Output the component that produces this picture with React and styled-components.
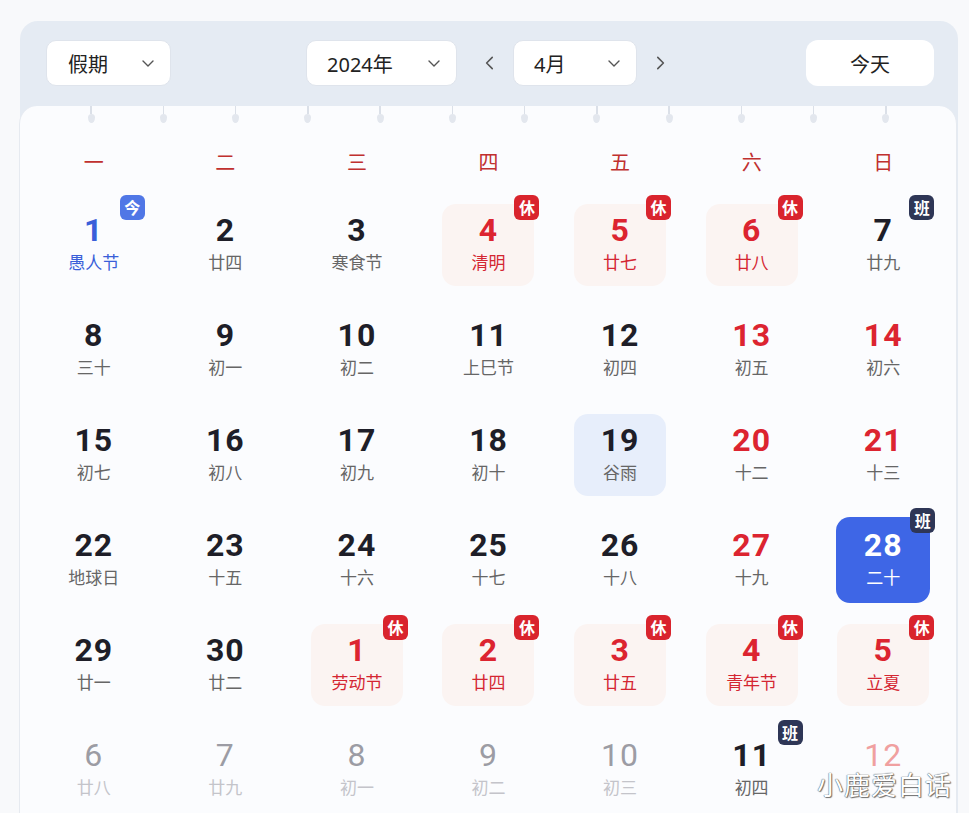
import React from "react";
import styled, { createGlobalStyle } from "styled-components";

const GlobalStyle = createGlobalStyle`
  html, body {
    margin: 0;
    padding: 0;
    background: #f8f9fb;
    overflow: hidden;
  }
  body {
    font-family: "Noto Sans CJK SC", "Noto Sans", sans-serif;
    color: #222;
  }
`;

const weekdays = ["一", "二", "三", "四", "五", "六", "日"];

// type: today | holiday | weekend | sel | active | muted | mutedWeekend
const weeks = [
  [
    { d: 1, l: "愚人节", t: "today", badge: "今" },
    { d: 2, l: "廿四" },
    { d: 3, l: "寒食节" },
    { d: 4, l: "清明", t: "holiday", badge: "休" },
    { d: 5, l: "廿七", t: "holiday", badge: "休" },
    { d: 6, l: "廿八", t: "holiday", badge: "休" },
    { d: 7, l: "廿九", badge: "班" },
  ],
  [
    { d: 8, l: "三十" },
    { d: 9, l: "初一" },
    { d: 10, l: "初二" },
    { d: 11, l: "上巳节" },
    { d: 12, l: "初四" },
    { d: 13, l: "初五", t: "weekend" },
    { d: 14, l: "初六", t: "weekend" },
  ],
  [
    { d: 15, l: "初七" },
    { d: 16, l: "初八" },
    { d: 17, l: "初九" },
    { d: 18, l: "初十" },
    { d: 19, l: "谷雨", t: "sel" },
    { d: 20, l: "十二", t: "weekend" },
    { d: 21, l: "十三", t: "weekend" },
  ],
  [
    { d: 22, l: "地球日" },
    { d: 23, l: "十五" },
    { d: 24, l: "十六" },
    { d: 25, l: "十七" },
    { d: 26, l: "十八" },
    { d: 27, l: "十九", t: "weekend" },
    { d: 28, l: "二十", t: "active", badge: "班" },
  ],
  [
    { d: 29, l: "廿一" },
    { d: 30, l: "廿二" },
    { d: 1, l: "劳动节", t: "holiday", badge: "休" },
    { d: 2, l: "廿四", t: "holiday", badge: "休" },
    { d: 3, l: "廿五", t: "holiday", badge: "休" },
    { d: 4, l: "青年节", t: "holiday", badge: "休" },
    { d: 5, l: "立夏", t: "holiday", badge: "休" },
  ],
  [
    { d: 6, l: "廿八", t: "muted" },
    { d: 7, l: "廿九", t: "muted" },
    { d: 8, l: "初一", t: "muted" },
    { d: 9, l: "初二", t: "muted" },
    { d: 10, l: "初三", t: "muted" },
    { d: 11, l: "初四", badge: "班" },
    { d: 12, l: "", t: "mutedWeekend" },
  ],
];

const numColor = {
  today: "#3a5fd9",
  holiday: "#dc2430",
  weekend: "#dc2430",
  active: "#ffffff",
  muted: "#9c9ca4",
  mutedWeekend: "#f0a0a0",
};

const lunarColor = {
  today: "#3a5fd9",
  holiday: "#d42632",
  active: "#ffffff",
  muted: "#c4c4ca",
  mutedWeekend: "#e8c4c4",
};

const boxBg = {
  holiday: "#fbf4f2",
  sel: "#e7eefb",
  active: "#3e66e6",
};

const badgeBg = {
  "休": "#d9242d",
  "班": "#2e3656",
  "今": "#5077e6",
};

const Page = styled.div`
  padding: 21px 11px 0 20px;
`;

const Panel = styled.div`
  width: 938px;
  background: #e5ebf3;
  border-radius: 18px 18px 0 0;
`;

const Toolbar = styled.div`
  display: grid;
  grid-template-columns: 260px auto 1fr;
  align-items: center;
  padding: 19px 24px 20px 26px;
`;

const Group = styled.div`
  display: flex;
  align-items: center;
`;

const Select = styled.div`
  box-sizing: border-box;
  width: ${({ w }) => w}px;
  height: 46px;
  display: flex;
  align-items: center;
  justify-content: space-between;
  padding: 0 14px 0 ${({ pl }) => pl || 20}px;
  background: #fff;
  border: 1px solid #dfe4ec;
  border-radius: 10px;
  font-size: 20px;
  color: #222;
  font-family: "Noto Sans", "Noto Sans CJK SC", sans-serif;
`;

const Arrow = styled.div`
  width: ${({ w }) => w}px;
  height: 46px;
  display: flex;
  align-items: center;
  justify-content: ${({ side }) => (side === "left" ? "flex-start" : "center")};
  padding-left: ${({ side }) => (side === "left" ? 24 : 0)}px;
  box-sizing: border-box;
`;

const TodayButton = styled.div`
  justify-self: end;
  width: 128px;
  height: 46px;
  display: flex;
  align-items: center;
  justify-content: center;
  background: #fff;
  border-radius: 12px;
  font-size: 20px;
  color: #222;
`;

const Card = styled.div`
  position: relative;
  background: #fbfcfe;
  border-radius: 18px 18px 0 0;
  border-left: 1px solid #e6eaf0;
  border-right: 1px solid #e6eaf0;
  margin: 0 1px 0 -1px;
  height: 740px;
`;

const Pins = styled.div`
  display: flex;
  justify-content: space-between;
  padding: 0 66px 0 67px;
  height: 24px;
`;

const Pin = styled.div`
  width: 8px;
  display: flex;
  flex-direction: column;
  align-items: center;

  &::before {
    content: "";
    width: 1.5px;
    height: 8px;
    background: #dbe0e8;
  }
  &::after {
    content: "";
    width: 7px;
    height: 9px;
    border-radius: 50% 50% 50% 50% / 40% 40% 60% 60%;
    background: #e3e7ee;
  }
`;

const Grid = styled.div`
  display: grid;
  grid-template-columns: repeat(7, 1fr);
  padding: 0 7px 0 8px;
`;

const Weekday = styled.div`
  height: 62px;
  display: flex;
  align-items: center;
  justify-content: center;
  font-size: 20px;
  font-weight: 400;
  color: #c0302f;
`;

const Cell = styled.div`
  height: 105px;
  display: flex;
  align-items: center;
  justify-content: center;
`;

const Box = styled.div`
  position: relative;
  width: ${({ t }) => (t === "active" ? 94 : 92)}px;
  height: ${({ t }) => (t === "active" ? 86 : 82)}px;
  border-radius: 14px;
  background: ${({ t }) => boxBg[t] || "transparent"};
  display: flex;
  flex-direction: column;
  align-items: center;
  justify-content: center;
  padding-bottom: 3px;
  box-sizing: border-box;
`;

const Num = styled.div`
  font-family: "Roboto", "Noto Sans", sans-serif;
  font-weight: ${({ t }) => (t === "muted" || t === "mutedWeekend" ? 400 : 700)};
  font-size: 32px;
  line-height: 34px;
  letter-spacing: 1px;
  color: ${({ t }) => numColor[t] || "#1e1e28"};
`;

const Lunar = styled.div`
  margin-top: 4px;
  font-size: 17px;
  line-height: 22px;
  min-height: 22px;
  color: ${({ t }) => lunarColor[t] || "#666"};
`;

const Badge = styled.div`
  position: absolute;
  top: -9px;
  right: -5px;
  width: 25px;
  height: 25px;
  border-radius: 6px;
  background: ${({ kind }) => badgeBg[kind]};
  color: #fff;
  font-size: 16px;
  font-weight: 700;
  display: flex;
  align-items: center;
  justify-content: center;
`;

const Watermark = styled.div`
  position: absolute;
  right: 4px;
  top: 663px;
  font-size: 26px;
  line-height: 30px;
  color: #fff;
  letter-spacing: 1px;
  text-shadow: 0 0 1px #555, 0 0 1px #555, 1px 1px 1px #777;
`;

const Chevron = ({ dir = "down", size = 16 }) => {
  const d = {
    down: "M3 6l5 5 5-5",
    left: "M10 3L5 8l5 5",
    right: "M6 3l5 5-5 5",
  }[dir];
  return (
    <svg width={size} height={size} viewBox="0 0 16 16" fill="none">
      <path d={d} stroke="#555" strokeWidth="1.4" strokeLinecap="round" strokeLinejoin="round" />
    </svg>
  );
};

export default function App() {
  return (
    <Page>
      <GlobalStyle />
      <Panel>
        <Toolbar>
          <Select w={125} pl={21}>
            假期 <Chevron />
          </Select>
          <Group>
            <Select w={151}>
              2024年 <Chevron />
            </Select>
            <Arrow w={56} side="left">
              <Chevron dir="left" size={18} />
            </Arrow>
            <Select w={124}>
              4月 <Chevron />
            </Select>
            <Arrow w={46}>
              <Chevron dir="right" size={18} />
            </Arrow>
          </Group>
          <TodayButton>今天</TodayButton>
        </Toolbar>
        <Card>
          <Pins>
            {Array.from({ length: 12 }).map((_, i) => (
              <Pin key={i} />
            ))}
          </Pins>
          <Grid>
            {weekdays.map((w) => (
              <Weekday key={w}>{w}</Weekday>
            ))}
            {weeks.flat().map((c, i) => (
              <Cell key={i}>
                <Box t={c.t}>
                  <Num t={c.t}>{c.d}</Num>
                  <Lunar t={c.t}>{c.l}</Lunar>
                  {c.badge && <Badge kind={c.badge}>{c.badge}</Badge>}
                </Box>
              </Cell>
            ))}
          </Grid>
          <Watermark>小鹿爱白话</Watermark>
        </Card>
      </Panel>
    </Page>
  );
}
